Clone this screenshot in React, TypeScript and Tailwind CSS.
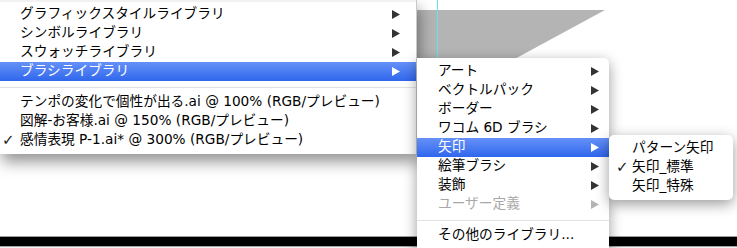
import React from 'react';

type Item =
  | { kind: 'sep' }
  | { kind: 'item'; label: string; sub?: boolean; active?: boolean; disabled?: boolean; checked?: boolean };

const mainItems: Item[] = [
  { kind: 'item', label: 'グラフィックスタイルライブラリ', sub: true },
  { kind: 'item', label: 'シンボルライブラリ', sub: true },
  { kind: 'item', label: 'スウォッチライブラリ', sub: true },
  { kind: 'item', label: 'ブラシライブラリ', sub: true, active: true },
  { kind: 'sep' },
  { kind: 'item', label: 'テンポの変化で個性が出る.ai @ 100% (RGB/プレビュー)' },
  { kind: 'item', label: '図解-お客様.ai @ 150% (RGB/プレビュー)' },
  { kind: 'item', label: '感情表現 P-1.ai* @ 300% (RGB/プレビュー)', checked: true },
];

const brushItems: Item[] = [
  { kind: 'item', label: 'アート', sub: true },
  { kind: 'item', label: 'ベクトルパック', sub: true },
  { kind: 'item', label: 'ボーダー', sub: true },
  { kind: 'item', label: 'ワコム 6D ブラシ', sub: true },
  { kind: 'item', label: '矢印', sub: true, active: true },
  { kind: 'item', label: '絵筆ブラシ', sub: true },
  { kind: 'item', label: '装飾', sub: true },
  { kind: 'item', label: 'ユーザー定義', sub: true, disabled: true },
  { kind: 'sep' },
  { kind: 'item', label: 'その他のライブラリ...' },
];

const arrowItems: Item[] = [
  { kind: 'item', label: 'パターン矢印' },
  { kind: 'item', label: '矢印_標準', checked: true },
  { kind: 'item', label: '矢印_特殊' },
];

function Arrow({ color }: { color: string }) {
  return (
    <svg width="8" height="9" viewBox="0 0 8 9" className="shrink-0">
      <polygon points="0,0 8,4.5 0,9" fill={color} />
    </svg>
  );
}

function MenuRows({ items, padLeft, padRight, checkLeft }: { items: Item[]; padLeft: string; padRight: string; checkLeft: string }) {
  return (
    <>
      {items.map((it, i) =>
        it.kind === 'sep' ? (
          <div key={i} className="h-[12px] flex items-center">
            <div className="h-px w-full bg-[#e2e2e2]" />
          </div>
        ) : (
          <div
            key={i}
            className={`relative h-[19px] flex items-center justify-between ${padLeft} ${padRight} ${
              it.active ? 'bg-gradient-to-b from-[#6590f7] to-[#2f66ed] text-white' : it.disabled ? 'text-[#a8a8a8]' : 'text-black'
            }`}
          >
            {it.checked && (
              <span className={`absolute ${checkLeft} top-0 h-[18px] flex items-center text-[15px] text-[#222]`}>
                ✓
              </span>
            )}
            <span className="whitespace-nowrap leading-none -mt-px">{it.label}</span>
            {it.sub && <Arrow color={it.active ? '#ffffff' : it.disabled ? '#b4b4b4' : '#333333'} />}
          </div>
        )
      )}
    </>
  );
}

export default function App() {
  return (
    <div className="relative w-[737px] h-[248px] overflow-hidden bg-white text-[13.7px] font-['DejaVu_Sans','Noto_Sans_CJK_JP',sans-serif]">
      {/* document canvas behind the menus */}
      <div className="flex flex-col h-full">
        <div className="h-[236px]">
          <svg width="737" height="236" viewBox="0 0 737 236">
            <polygon points="380,10 605,10 380,132" fill="#b4b4b4" />
            <line x1="437.5" y1="0" x2="437.5" y2="236" stroke="#5ee8f2" strokeWidth="1" />
          </svg>
        </div>
        <div className="h-px bg-[#9c9c9c]" />
        <div className="h-[9px] bg-black" />
        <div className="h-px bg-[#a4a4a4]" />
        <div className="h-px bg-[#f2f2f2]" />
      </div>

      {/* file menu */}
      <div className="absolute left-0 top-0 w-[417px] bg-white border-r border-[#c9c9c9] shadow-[2px_8px_14px_rgba(0,0,0,0.42)] pb-[4px]">
        <div className="h-[5px] flex flex-col">
          <div className="h-[2px] bg-[#f1f1f1]" />
        </div>
        <MenuRows items={mainItems} padLeft="pl-[20px]" padRight="pr-[16px]" checkLeft="left-[2px]" />
      </div>

      {/* brush library submenu */}
      <div className="absolute left-[417px] top-[58px] w-[192px] h-[200px] bg-white rounded-tr-[5px] shadow-[0_4px_14px_rgba(0,0,0,0.4)] pt-[4px]">
        <MenuRows items={brushItems} padLeft="pl-[21px]" padRight="pr-[10px]" checkLeft="left-[4px]" />
      </div>

      {/* arrows submenu */}
      <div className="absolute left-[609px] top-[135px] w-[124px] bg-white rounded-[5px] shadow-[0_4px_14px_rgba(0,0,0,0.4)] py-[4px]">
        <MenuRows items={arrowItems} padLeft="pl-[23px]" padRight="pr-[8px]" checkLeft="left-[7px]" />
      </div>
    </div>
  );
}
